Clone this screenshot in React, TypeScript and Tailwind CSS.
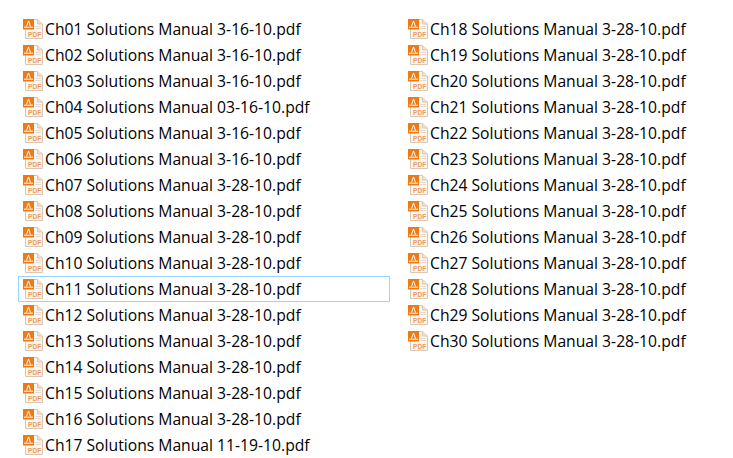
const LEFT = [
  'Ch01 Solutions Manual 3-16-10.pdf',
  'Ch02 Solutions Manual 3-16-10.pdf',
  'Ch03 Solutions Manual 3-16-10.pdf',
  'Ch04 Solutions Manual 03-16-10.pdf',
  'Ch05 Solutions Manual 3-16-10.pdf',
  'Ch06 Solutions Manual 3-16-10.pdf',
  'Ch07 Solutions Manual 3-28-10.pdf',
  'Ch08 Solutions Manual 3-28-10.pdf',
  'Ch09 Solutions Manual 3-28-10.pdf',
  'Ch10 Solutions Manual 3-28-10.pdf',
  'Ch11 Solutions Manual 3-28-10.pdf',
  'Ch12 Solutions Manual 3-28-10.pdf',
  'Ch13 Solutions Manual 3-28-10.pdf',
  'Ch14 Solutions Manual 3-28-10.pdf',
  'Ch15 Solutions Manual 3-28-10.pdf',
  'Ch16 Solutions Manual 3-28-10.pdf',
  'Ch17 Solutions Manual 11-19-10.pdf',
];

const RIGHT = Array.from({ length: 13 }, (_, i) => `Ch${i + 18} Solutions Manual 3-28-10.pdf`);

function PdfIcon() {
  return (
    <svg width="22" height="20" viewBox="0 0 22 20" className="flex-none">
      {/* page with folded corner */}
      <path d="M2.5 0.5H14.5L19.5 5V19.5H2.5Z" fill="#fbf6f0" stroke="#dcc6b0" />
      <path d="M14.5 0.5V5H19.5" fill="#eee0d2" stroke="#dcc6b0" />
      <path d="M12.5 7.5H18M12.5 9.5H18" stroke="#e6d8ca" />
      <rect x="0" y="0" width="11" height="10.5" fill="#ee7a14" />
      <path d="M5.5 2L3.5 7.5M5.5 2L7.5 7.5M1 8.2H10" fill="none" stroke="#fff" strokeWidth="1" />
      <text x="5" y="18" fontSize="6.6" fontWeight="700" fill="#eb9a5c" fontFamily="Liberation Sans, sans-serif">PDF</text>
    </svg>
  );
}

function FileRow({ name, selected }: { name: string; selected?: boolean }) {
  return (
    <div className={`flex h-[26px] items-center pl-[5px] ${selected ? 'outline outline-1 -outline-offset-1 outline-[#99d1ff]' : ''}`}>
      <PdfIcon />
      <span className="whitespace-nowrap pt-[2px] text-[15.7px] leading-none text-[#000]">{name}</span>
    </div>
  );
}

export default function App() {
  return (
    <div className="flex h-[458px] w-[733px] gap-[13px] overflow-hidden bg-white pl-[18px] pt-[16px] font-['Open_Sans','Noto_Sans',sans-serif]">
      <div className="flex w-[372px] flex-col">
        {LEFT.map((name) => (
          <FileRow key={name} name={name} selected={name.startsWith('Ch11')} />
        ))}
      </div>
      <div className="flex w-[300px] flex-col">
        {RIGHT.map((name) => (
          <FileRow key={name} name={name} />
        ))}
      </div>
    </div>
  );
}
